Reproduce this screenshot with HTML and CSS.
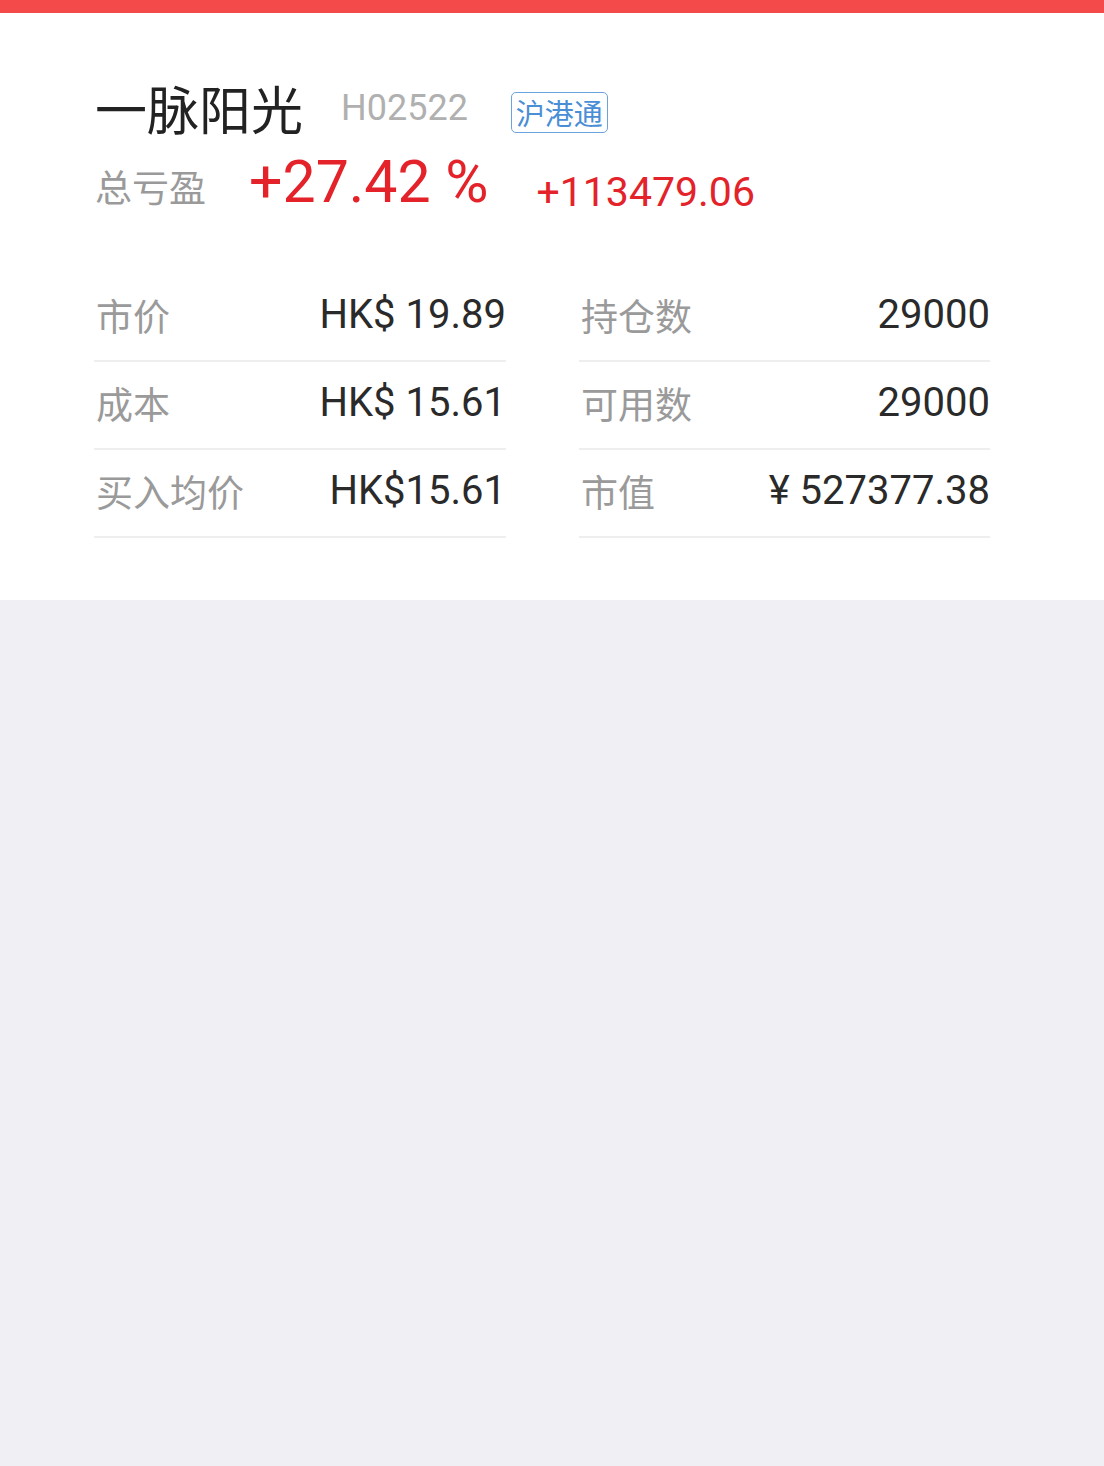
FILE: index.html
```html
<!DOCTYPE html>
<html lang="zh-CN">
<head>
<meta charset="utf-8">
<title>一脉阳光</title>
<link rel="stylesheet" href="styles.css">
</head>
<body>
<div class="topbar"></div>
<section class="card">
  <div class="head">
    <div class="title-row">
      <span class="name">一脉阳光</span>
      <span class="code">H02522</span>
      <span class="tag">沪港通</span>
    </div>
    <div class="pl-row">
      <span class="pl-label">总亏盈</span>
      <span class="pl-pct">+27.42 %</span>
      <span class="pl-amt">+113479.06</span>
    </div>
  </div>
  <div class="grid">
    <div class="col">
      <div class="row"><span class="label">市价</span><span class="value">HK$ 19.89</span></div>
      <div class="row"><span class="label">成本</span><span class="value">HK$ 15.61</span></div>
      <div class="row"><span class="label">买入均价</span><span class="value">HK$15.61</span></div>
    </div>
    <div class="col">
      <div class="row"><span class="label">持仓数</span><span class="value">29000</span></div>
      <div class="row"><span class="label">可用数</span><span class="value">29000</span></div>
      <div class="row"><span class="label">市值</span><span class="value">¥ 527377.38</span></div>
    </div>
  </div>
</section>
</body>
</html>
```
FILE: styles.css
```css
* { box-sizing: border-box; }
html, body {
  margin: 0;
  padding: 0;
  background: #efeff4;
  font-family: Roboto, "Noto Sans CJK SC", sans-serif;
}
.topbar {
  height: 13px;
  background: #f54a4a;
}
.card {
  background: #ffffff;
  padding: 65px 114px 62px 94px;
}
.head {
  display: flex;
  flex-direction: column;
}
.title-row {
  display: flex;
  align-items: center;
  height: 60px;
}
.name {
  font-family: "Noto Sans CJK SC", sans-serif;
  font-size: 52px;
  line-height: 60px;
  color: #222222;
  margin-left: 1px;
}
.code {
  font-size: 36px;
  color: #b0b0b0;
  margin-left: 38px;
  line-height: 60px;
}
.tag {
  font-family: "Noto Sans CJK SC", sans-serif;
  font-size: 29px;
  line-height: 39px;
  color: #4a8ed6;
  border: 1.5px solid #6ba3dd;
  border-radius: 5px;
  padding: 0 4px;
  margin-left: 43px;
  margin-top: 9px;
}
.pl-row {
  display: flex;
  align-items: baseline;
  margin-top: 9px;
  height: 62px;
}
.pl-label {
  font-family: "Noto Sans CJK SC", sans-serif;
  font-size: 37px;
  color: #9a9a9a;
  margin-left: 1px;
}
.pl-pct {
  font-size: 59px;
  color: #e3222a;
  margin-left: 43px;
}
.pl-amt {
  font-size: 41px;
  color: #e3222a;
  margin-left: 48px;
  position: relative;
  top: 4px;
}
.grid {
  display: grid;
  grid-template-columns: 412px 411px;
  column-gap: 73px;
  margin-top: 65px;
}
.row {
  display: flex;
  align-items: center;
  justify-content: space-between;
  height: 88px;
  padding-bottom: 5px;
  border-bottom: 2px solid #eeeeee;
}
.label {
  font-family: "Noto Sans CJK SC", sans-serif;
  font-size: 37px;
  color: #9a9a9a;
  padding-left: 2px;
}
.value {
  font-size: 40px;
  color: #2a2a2a;
}
```
